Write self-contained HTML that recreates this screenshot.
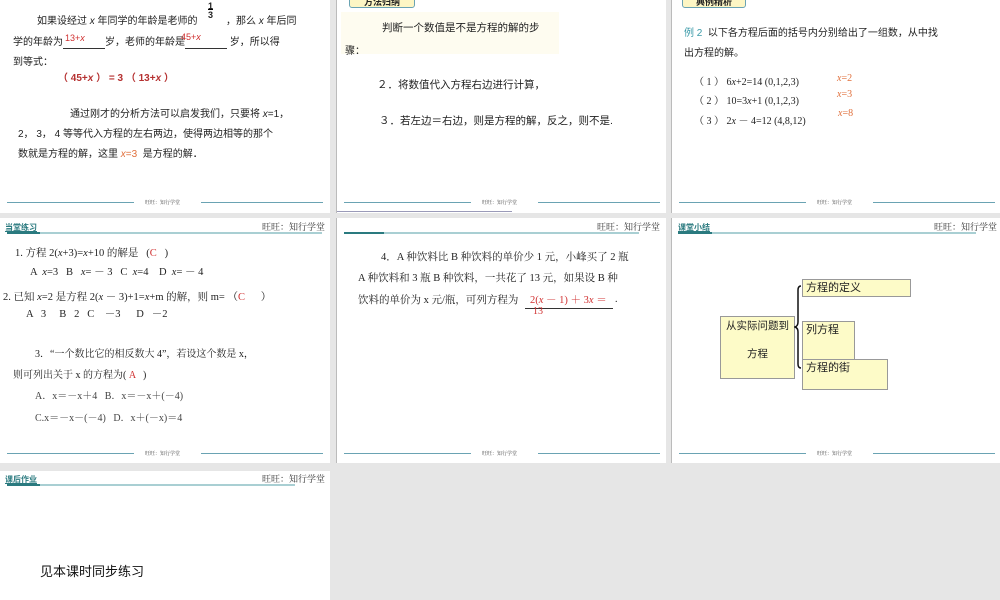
<!DOCTYPE html>
<html><head><meta charset="utf-8"><style>
*{margin:0;padding:0;box-sizing:border-box}
body{width:1000px;height:600px;background:#e6e6e6;position:relative;overflow:hidden;font-family:"Liberation Sans","Noto Sans CJK SC",sans-serif;color:#222}
.s{position:absolute;background:#fff;overflow:hidden}
.a{position:absolute;white-space:nowrap}
.r{color:#d03030}
.o{color:#e0703c}
.serif{font-family:"Liberation Serif","Noto Serif CJK SC",serif}
.foot{position:absolute;left:7px;right:7px;height:1px}
.fl{position:absolute;top:0;height:1px;background:#6aa3b3}
.ft{position:absolute;font-size:5px;color:#444;top:-3px;font-family:"Liberation Serif","Noto Serif CJK SC",serif}
.hd{position:absolute;font-size:8px;color:#2a7a7f;font-weight:bold;text-decoration:underline}
.hr{position:absolute;font-size:9px;color:#333;font-family:"Liberation Serif","Noto Serif CJK SC",serif}
.hl{position:absolute;height:2px;background:#a9cfd3}
.hk{position:absolute;height:2px;background:#2a7a7f}
.box{position:absolute;background:#fdfbc8;border:1px solid #999;font-size:11px;padding:2px 3px;white-space:nowrap}
.tab{position:absolute;background:#fdf6c4;border:1px solid #6aa3b3;border-radius:3px;font-size:9px;font-weight:bold;text-align:center}
</style></head><body>

<div class="s" style="left:0;top:0;width:330px;height:213px">
 <div class="a" style="left:37px;top:12px;font-size:10px">如果设经过 <i>x</i> 年同学的年龄是老师的</div>
 <div class="a" style="left:208px;top:2px;font-size:9px;font-weight:bold;line-height:9px;text-align:center">1<br><span style="border-top:1px solid #000">3</span></div>
 <div class="a" style="left:226px;top:12px;font-size:10px">，那么 <i>x</i> 年后同</div>
 <div class="a" style="left:13px;top:33px;font-size:10px">学的年龄为<span style="display:inline-block;width:42px;border-bottom:1px solid #333;position:relative"><span class="r" style="position:absolute;left:2px;top:-4px;font-size:9px">13+<i>x</i></span>&nbsp;</span>岁，老师的年龄是<span style="display:inline-block;width:42px;border-bottom:1px solid #333;position:relative"><span class="r" style="position:absolute;left:-4px;top:-5px;font-size:9px">45+<i>x</i></span>&nbsp;</span> 岁，所以得</div>
 <div class="a" style="left:13px;top:53px;font-size:10px">到等式：</div>
 <div class="a r" style="left:58px;top:69px;font-size:10px;font-weight:bold;color:#b53030">（ 45+<i>x</i> ） = 3 （ 13+<i>x</i> ）</div>
 <div class="a" style="left:70px;top:105px;font-size:10px">通过刚才的分析方法可以启发我们，只要将 <i>x</i>=1，</div>
 <div class="a" style="left:18px;top:125px;font-size:10px">2， 3， 4 等等代入方程的左右两边，使得两边相等的那个</div>
 <div class="a" style="left:18px;top:145px;font-size:10px">数就是方程的解，这里 <span class="o"><i>x</i>=3</span>&nbsp; 是方程的解．</div>
 <div class="foot" style="top:202px"><div class="fl" style="left:0;width:127px"></div><div class="ft" style="left:138px">旺旺：知行学堂</div><div class="fl" style="left:194px;width:122px"></div></div>
</div>

<div class="s" style="left:336px;top:0;width:330px;height:213px;border-left:1px solid #bbb">
 <div class="tab" style="left:12px;top:-4px;width:66px;height:12px;line-height:10px">方法归纳</div>
 <div class="a" style="left:4px;top:12px;width:218px;height:42px;background:#fefcf0"></div>
 <div class="a" style="left:45px;top:20px;font-size:10.5px">判断一个数值是不是方程的解的步</div>
 <div class="a" style="left:8px;top:42px;font-size:10px">骤：</div>
 <div class="a" style="left:40px;top:77px;font-size:10.5px">２．将数值代入方程右边进行计算，</div>
 <div class="a" style="left:42px;top:113px;font-size:10.5px">３．若左边＝右边，则是方程的解，反之，则不是.</div>
 <div class="foot" style="top:202px"><div class="fl" style="left:0;width:127px"></div><div class="ft" style="left:138px">旺旺：知行学堂</div><div class="fl" style="left:194px;width:122px"></div></div>
 <div class="a" style="left:0;top:211px;width:175px;height:1px;background:#9a9ab8"></div>
</div>

<div class="s" style="left:671px;top:0;width:329px;height:213px;border-left:1px solid #bbb">
 <div class="tab" style="left:10px;top:-4px;width:64px;height:12px;line-height:10px">典例精析</div>
 <div class="a" style="left:12px;top:24px;font-size:10px"><span style="color:#3a9aa8">例 2</span>&nbsp; 以下各方程后面的括号内分别给出了一组数，从中找</div>
 <div class="a" style="left:12px;top:44px;font-size:10px">出方程的解。</div>
 <div class="a serif" style="left:22px;top:73px;font-size:10px">（ 1 ） 6<i>x</i>+2=14 (0,1,2,3)</div>
 <div class="a serif" style="left:22px;top:92px;font-size:10px">（ 2 ） 10=3<i>x</i>+1 (0,1,2,3)</div>
 <div class="a serif" style="left:22px;top:112px;font-size:10px">（ 3 ） 2<i>x</i> － 4=12 (4,8,12)</div>
 <div class="a serif o" style="left:165px;top:73px;font-size:10px"><i>x</i>=2</div>
 <div class="a serif o" style="left:165px;top:89px;font-size:10px"><i>x</i>=3</div>
 <div class="a serif o" style="left:166px;top:108px;font-size:10px"><i>x</i>=8</div>
 <div class="foot" style="top:202px"><div class="fl" style="left:0;width:127px"></div><div class="ft" style="left:138px">旺旺：知行学堂</div><div class="fl" style="left:194px;width:122px"></div></div>
</div>

<div class="s" style="left:0;top:218px;width:330px;height:245px">
 <div class="hd" style="left:5px;top:4px">当堂练习</div>
 <div class="hk" style="left:7px;top:14px;width:40px"></div>
 <div class="hl" style="left:40px;top:14px;width:282px"></div>
 <div class="hr" style="left:262px;top:2px">旺旺：知行学堂</div>
 <div class="a serif" style="left:15px;top:27px;font-size:10.5px">1. 方程 2(<i>x</i>+3)=<i>x</i>+10 的解是 &nbsp;&nbsp;(<span class="r">C</span> &nbsp;&nbsp;)</div>
 <div class="a serif" style="left:30px;top:46px;font-size:10.5px">A &nbsp;<i>x</i>=3 &nbsp;&nbsp;B &nbsp;&nbsp;<i>x</i>= － 3 &nbsp;&nbsp;C &nbsp;<i>x</i>=4 &nbsp;&nbsp;&nbsp;D &nbsp;<i>x</i>= － 4</div>
 <div class="a serif" style="left:3px;top:71px;font-size:10.5px">2. 已知 <i>x</i>=2 是方程 2(<i>x</i> － 3)+1=<i>x</i>+m 的解，则 m= （<span class="r">C</span> &nbsp;&nbsp;&nbsp;&nbsp;&nbsp;）</div>
 <div class="a serif" style="left:26px;top:88px;font-size:10.5px">A &nbsp;&nbsp;3 &nbsp;&nbsp;&nbsp;&nbsp;B &nbsp;&nbsp;2 &nbsp;&nbsp;C &nbsp;&nbsp;&nbsp;－3 &nbsp;&nbsp;&nbsp;&nbsp;&nbsp;D &nbsp;&nbsp;－2</div>
 <div class="a serif" style="left:35px;top:127px;font-size:10px">3．“一个数比它的相反数大 4”，若设这个数是 x，</div>
 <div class="a serif" style="left:13px;top:148px;font-size:10px">则可列出关于 x 的方程为( <span class="r">A</span> &nbsp;&nbsp;)</div>
 <div class="a serif" style="left:35px;top:169px;font-size:10px;color:#444">A．x＝－x＋4 &nbsp;&nbsp;B．x＝－x＋(－4)</div>
 <div class="a serif" style="left:35px;top:191px;font-size:10px;color:#444">C.x＝－x－(－4) &nbsp;&nbsp;D．x＋(－x)＝4</div>
 <div class="foot" style="top:235px"><div class="fl" style="left:0;width:127px"></div><div class="ft" style="left:138px">旺旺：知行学堂</div><div class="fl" style="left:194px;width:122px"></div></div>
</div>

<div class="s" style="left:336px;top:218px;width:330px;height:245px;border-left:1px solid #bbb">
 <div class="hr" style="left:260px;top:2px">旺旺：知行学堂</div>
 <div class="hk" style="left:7px;top:14px;width:40px"></div>
 <div class="hl" style="left:47px;top:14px;width:255px"></div>
 <div class="a serif" style="left:44px;top:31px;font-size:10.5px">4．A 种饮料比 B 种饮料的单价少 1 元，小峰买了 2 瓶</div>
 <div class="a serif" style="left:21px;top:52px;font-size:10.5px">A 种饮料和 3 瓶 B 种饮料，一共花了 13 元，如果设 B 种</div>
 <div class="a serif" style="left:21px;top:74px;font-size:10.5px">饮料的单价为 x 元/瓶，可列方程为</div>
 <div class="a" style="left:188px;top:90px;width:88px;height:1px;background:#333"></div>
 <div class="a serif r" style="left:193px;top:74px;font-size:10.5px">2(<i>x</i> － 1) ＋ 3<i>x</i> ＝</div>
 <div class="a serif" style="left:278px;top:76px;font-size:10px">.</div>
 <div class="a serif r" style="left:196px;top:88px;font-size:10px">13</div>
 <div class="foot" style="top:235px"><div class="fl" style="left:0;width:127px"></div><div class="ft" style="left:138px">旺旺：知行学堂</div><div class="fl" style="left:194px;width:122px"></div></div>
</div>

<div class="s" style="left:671px;top:218px;width:329px;height:245px;border-left:1px solid #bbb">
 <div class="hd" style="left:6px;top:4px">课堂小结</div>
 <div class="hk" style="left:6px;top:14px;width:40px"></div>
 <div class="hl" style="left:40px;top:14px;width:264px"></div>
 <div class="hr" style="left:262px;top:2px">旺旺：知行学堂</div>
 <div class="box" style="left:48px;top:98px;width:75px;height:63px;text-align:center;line-height:14px;padding:2px 0;font-size:10.5px">从实际问题到<br><br>方程</div>
 <div class="box" style="left:130px;top:61px;width:109px;height:18px;line-height:12px">方程的定义</div>
 <div class="box" style="left:130px;top:103px;width:53px;height:40px;line-height:12px">列方程</div>
 <div class="box" style="left:130px;top:141px;width:86px;height:31px;line-height:12px">方程的街</div>
 <svg class="a" style="left:122px;top:66px" width="10" height="86"><path d="M7 2 Q4 2 4 6 L4 38 Q4 42 1 43 Q4 44 4 48 L4 80 Q4 84 7 84" fill="none" stroke="#111" stroke-width="1.5"/></svg>
 <div class="foot" style="top:235px"><div class="fl" style="left:0;width:127px"></div><div class="ft" style="left:138px">旺旺：知行学堂</div><div class="fl" style="left:194px;width:122px"></div></div>
</div>

<div class="s" style="left:0;top:471px;width:330px;height:129px">
 <div class="hd" style="left:5px;top:3px">课后作业</div>
 <div class="hk" style="left:7px;top:13px;width:40px"></div>
 <div class="hl" style="left:40px;top:13px;width:255px"></div>
 <div class="hr" style="left:262px;top:1px">旺旺：知行学堂</div>
 <div class="a" style="left:40px;top:90px;font-size:13px;color:#111">见本课时同步练习</div>
</div>

</body></html>
